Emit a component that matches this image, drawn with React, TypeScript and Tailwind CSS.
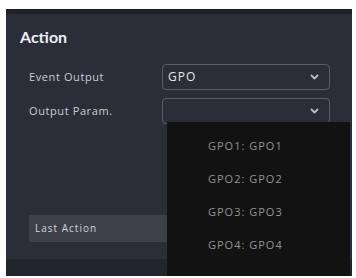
import React from "react";

function Chevron() {
  return (
    <svg width="9" height="6" viewBox="0 0 9 6" className="shrink-0">
      <path d="M1.5 1.5 L4.5 4.5 L7.5 1.5" stroke="#b8bcc6" strokeWidth="1.8" fill="none" strokeLinecap="round" strokeLinejoin="round" />
    </svg>
  );
}

export default function App() {
  const items = ["GPO1: GPO1", "GPO2: GPO2", "GPO3: GPO3", "GPO4: GPO4"];
  return (
    <div className="w-[356px] h-[278px] bg-white overflow-hidden" style={{ fontFamily: "'Open Sans', 'Noto Sans', sans-serif" }}>
      <div className="relative ml-[6px] mt-[9px] w-[346px] h-[267px] bg-[#2b2e38] border-t-[5px] border-[#1f2128] flex flex-col">
        <div className="pl-[14px] pt-[13px] text-[16px] font-bold text-[#eceef2] leading-[20px]" style={{ fontFamily: "Lato, sans-serif" }}>Action</div>
        <div className="flex flex-col gap-[8px] mt-[17px] pl-[23px] pr-[22px]">
          <div className="flex items-center">
            <div className="w-[133px] text-[11px] tracking-[0.6px] text-[#c9ccd3]">Event Output</div>
            <div className="flex-1 h-[26px] rounded-[4px] border border-[#5a5e69] bg-[#2b2e38] flex items-center justify-between px-[5px] pr-[10px]">
              <span className="text-[12px] tracking-[1px] text-[#e4e6ea]">GPO</span>
              <Chevron />
            </div>
          </div>
          <div className="flex items-center">
            <div className="w-[133px] text-[11px] tracking-[0.6px] text-[#c9ccd3]">Output Param.</div>
            <div className="flex-1 h-[26px] rounded-[4px] border border-[#5a5e69] bg-[#2b2e38] flex items-center justify-end px-[5px] pr-[10px]">
              <Chevron />
            </div>
          </div>
        </div>
        <div className="mt-[91px] ml-[23px] mr-[14px] h-[27px] bg-[#3d4049] flex items-center pl-[6px]">
          <span className="text-[10px] tracking-[1px] text-[#d2d5dc]">Last Action</span>
        </div>
        <div className="flex-1" />
        <div className="h-[17px] bg-[#23252d]" />
        <div className="absolute left-[161px] top-[108px] w-[183px] bottom-0 bg-[#121213] flex flex-col pt-[8px]">
          {items.map((t) => (
            <div key={t} className="h-[33px] flex items-center pl-[41px] text-[11px] tracking-[1px] text-[#929397]">
              {t}
            </div>
          ))}
        </div>
      </div>
    </div>
  );
}
